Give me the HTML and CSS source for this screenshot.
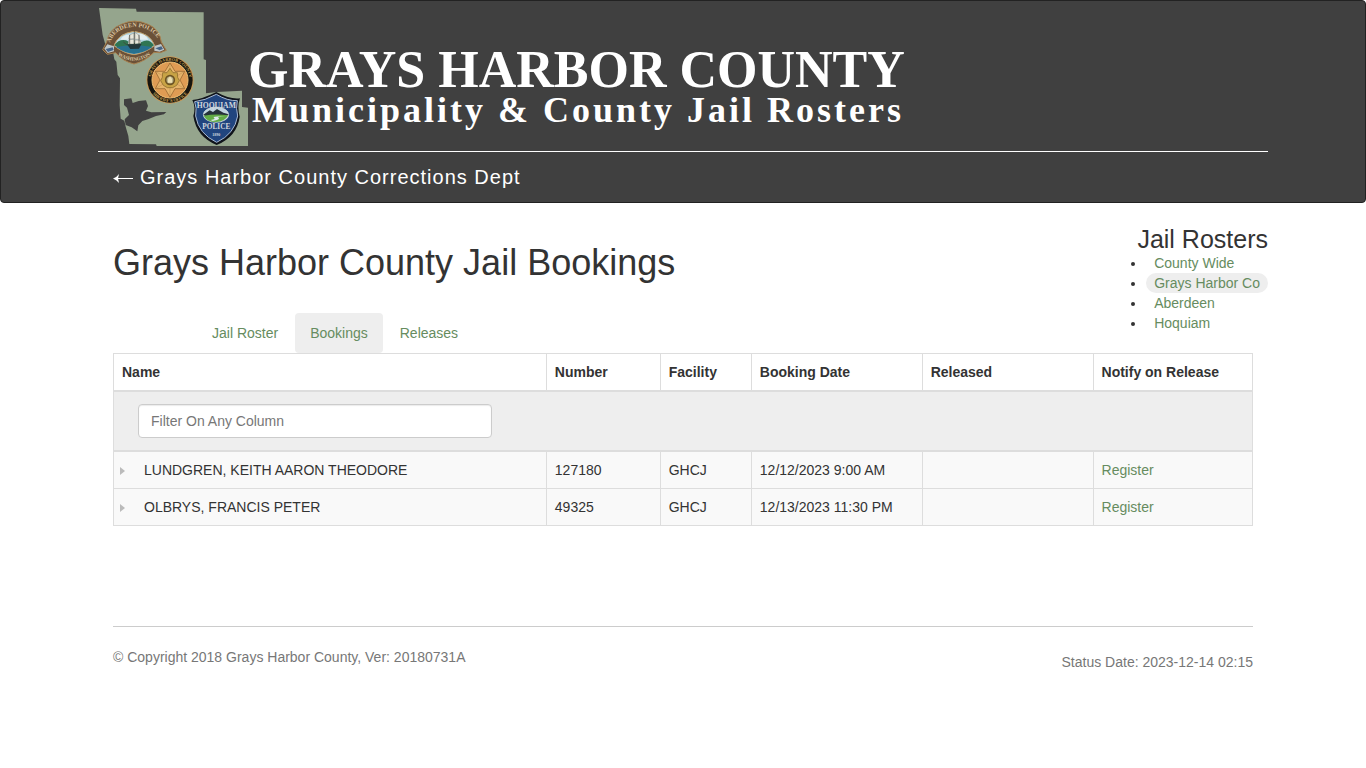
FILE: index.html
```html
<!DOCTYPE html>
<html lang="en">
<head>
  <meta charset="UTF-8" />
  <meta name="viewport" content="width=device-width, initial-scale=1" />
  <title>Grays Harbor County Jail Bookings</title>
  <link rel="stylesheet" href="styles.css">
</head>
<body>

  <header class="navbar">
    <div class="container">
      <div class="banner">
        <svg class="county-map" viewBox="24 24 450 417" aria-hidden="true">
          <defs>
            <path id="aberdeenTop" d="M58 136 Q70 84 133 80 Q194 83 211 132" />
            <path id="aberdeenBottom" d="M78 161 Q132 203 188 161" />
            <path id="sheriffTop" d="M182 240 A58 58 0 0 1 298 240" />
            <path id="sheriffBottom" d="M174 240 A66 66 0 0 0 306 240" />
          </defs>
          <!-- county outline with the harbor cut out -->
          <path fill="#95a58d" d="M27 24 L138 26 L140 35 L341 37 L341 178 L348 180 L348 280 L380 276 L456 272 L456 321 L474 323 L474 438 L200 438 L198 433 L118 432 L115 408 L107 380 L103 362 L92 356 L89 316 L90 235 L83 225 L79 185 L73 178 L68 150 L47 137 L38 105 Z" />
          <path fill="#404040" d="M102 298 L124 295 L128 309 L146 303 L168 301 L174 318 L168 332 L184 337 L229 336 L222 343 L198 348 L176 357 L157 363 L145 376 L142 394 L125 382 L107 375 L104 358 L117 345 L111 323 L102 315 Z" />

          <!-- Aberdeen -->
          <path fill="#6b5138" stroke="#a8814f" stroke-width="3" d="M38 149 L50 126 Q57 87 94 73 Q134 54 174 73 Q209 87 214 126 L229 151 L211 158 L192 157 Q166 184 132 192 Q98 184 77 158 L52 163 Z" />
          <path fill="#bfc7c9" d="M43 146 L52 133 L72 139 L72 154 L53 159 Z M193 138 L213 132 L223 149 L209 155 L193 152 Z" />
          <path fill="#456487" d="M47 147 L68 142 L71 150 L54 156 Z M196 145 L214 139 L219 147 L209 151 Z" />
          <path fill="#b4d6e3" stroke="#c49c62" stroke-width="3" d="M72 137 Q84 101 132 94 Q182 101 194 137 Q163 160 132 164 Q101 160 72 137 Z" />
          <path fill="#e5eef0" d="M91 119 Q101 102 121 105 L139 101 Q165 98 175 119 Z" />
          <path fill="#2f7552" d="M73 136 Q87 116 108 121 L124 130 L153 127 Q177 112 192 136 L180 144 H86 Z" />
          <path fill="#28718f" d="M78 141 Q132 130 187 141 Q163 158 132 162 Q101 158 78 141 Z" />
          <path fill="#24373a" d="M111 133 L155 131 L147 146 L121 147 Z" />
          <path fill="#e9e7dc" stroke="#59625f" stroke-width="1" d="M119 105 L132 99 L132 116 L116 117 Z M135 97 L147 106 L149 118 L135 118 Z M117 119 L132 118 L132 132 L114 132 Z M135 120 L151 121 L153 130 L135 132 Z" />
          <path stroke="#423e33" stroke-width="2" d="M133 91 V135 M119 105 V134 M147 104 V133 M111 135 L100 126" />
          <text class="seal-text aberdeen-text"><textPath href="#aberdeenTop" startOffset="8">ABERDEEN POLICE</textPath></text>
          <text class="seal-text aberdeen-small"><textPath href="#aberdeenBottom" startOffset="7">WASHINGTON</textPath></text>

          <!-- Sheriff -->
          <circle cx="240" cy="240" r="71" fill="#c99a58" />
          <circle cx="240" cy="240" r="68" fill="#17150f" />
          <circle cx="240" cy="240" r="54" fill="#df9c54" stroke="#efc176" stroke-width="3" />
          <path fill="#e6b46a" stroke="#8b5c28" stroke-width="2" d="M240 189 L255 214 L284 214 L270 240 L284 266 L255 266 L240 292 L225 266 L196 266 L210 240 L196 214 L225 214 Z" />
          <path stroke="#a6733d" stroke-width="1" d="M240 189 V292 M196 214 L284 266 M284 214 L196 266" />
          <path fill="#c8a345" stroke="#806025" stroke-width="2" d="M240 205 L249 218 L262 218 L263 232 L268 242 L260 256 L248 263 H232 L220 256 L212 242 L217 232 L218 218 L231 218 Z" />
          <circle cx="240" cy="240" r="13" fill="#b9b28a" stroke="#6d5322" stroke-width="5" />
          <path fill="#eee0b0" d="M234 237 L240 229 L246 237 V248 H234 Z" />
          <text class="seal-text sheriff-text"><textPath href="#sheriffTop" startOffset="10">GRAYS HARBOR COUNTY</textPath></text>
          <text class="seal-text sheriff-text"><textPath href="#sheriffBottom" startOffset="44">SHERIFF'S OFFICE</textPath></text>

          <!-- Hoquiam -->
          <path fill="#10141b" d="M307 300 Q335 298 379 276 Q420 299 450 295 Q441 320 449 350 Q441 410 380 435 Q319 410 310 348 Q318 322 307 300 Z" />
          <path fill="#21457f" stroke="#a8b8d2" stroke-width="3" d="M314 305 Q344 302 379 283 Q412 303 442 302 Q437 325 443 348 Q434 402 380 427 Q326 402 317 348 Q321 323 314 305 Z" />
          <ellipse cx="378" cy="344" rx="38" ry="23" fill="#bfd3e0" stroke="#e0e5df" stroke-width="2" />
          <path fill="#26323a" d="M340 344 L359 331 L369 336 L381 327 L400 338 L416 343 L407 349 H347 Z" />
          <path fill="#62ab46" d="M341 347 Q378 340 415 346 Q403 366 378 366 Q351 366 341 347 Z" />
          <path fill="#dde9eb" d="M405 349 Q379 350 386 354 Q392 358 368 363 L362 360 Q380 357 371 353 Q370 347 405 349 Z" />
          <text class="seal-text hoquiam-name" x="379" y="325">HOQUIAM</text>
          <text class="seal-text hoquiam-police" x="379" y="387">POLICE</text>
          <text class="seal-text hoquiam-year" x="379" y="408">1890</text>
        </svg>
        <div class="banner-text">
          <div class="banner-title">GRAYS HARBOR COUNTY</div>
          <div class="banner-subtitle">Municipality &amp; County Jail Rosters</div>
        </div>
      </div>
      <div class="department">
        <a href="#">
          <svg class="back-arrow" viewBox="0 0 20 12" aria-hidden="true">
            <path d="M20 5.5 H2" stroke="#fff" />
            <path d="M0 5.5 Q4 4 6 1 L5 5.5 L6 10 Q4 7 0 5.5 Z" fill="#fff" />
          </svg>
          Grays Harbor County Corrections Dept
        </a>
      </div>
    </div>
  </header>

  <main class="container content">
    <div class="page-top">
      <div>
        <h1>Grays Harbor County Jail Bookings</h1>
        <nav class="tabs">
          <a href="#">Jail Roster</a>
          <a href="#" class="active">Bookings</a>
          <a href="#">Releases</a>
        </nav>
      </div>
      <aside class="rosters">
        <h3>Jail Rosters</h3>
        <ul>
          <li><a href="#">County Wide</a></li>
          <li><a href="#" class="active">Grays Harbor Co</a></li>
          <li><a href="#">Aberdeen</a></li>
          <li><a href="#">Hoquiam</a></li>
        </ul>
      </aside>
    </div>

    <table>
      <colgroup>
        <col class="col-name"><col class="col-number"><col class="col-facility">
        <col class="col-date"><col class="col-date"><col class="col-notify">
      </colgroup>
      <thead>
        <tr>
          <th>Name</th><th>Number</th><th>Facility</th><th>Booking Date</th><th>Released</th><th>Notify on Release</th>
        </tr>
        <tr class="filter-row">
          <td colspan="6"><input type="text" id="filter" aria-label="Filter On Any Column" placeholder="Filter On Any Column" /></td>
        </tr>
      </thead>
      <tbody id="bookings">
        <tr>
          <td><button type="button" class="expand" aria-label="Show details"></button>LUNDGREN, KEITH AARON THEODORE</td>
          <td>127180</td>
          <td>GHCJ</td>
          <td>12/12/2023 9:00 AM</td>
          <td></td>
          <td><a href="#">Register</a></td>
        </tr>
        <tr>
          <td><button type="button" class="expand" aria-label="Show details"></button>OLBRYS, FRANCIS PETER</td>
          <td>49325</td>
          <td>GHCJ</td>
          <td>12/13/2023 11:30 PM</td>
          <td></td>
          <td><a href="#">Register</a></td>
        </tr>
      </tbody>
    </table>

    <footer>
      <p>© Copyright 2018 Grays Harbor County, Ver: 20180731A</p>
      <p class="status">Status Date: 2023-12-14 02:15</p>
    </footer>
  </main>

  <script>
    const filter = document.getElementById('filter');

    // Hide the bookings that do not contain the filter text
    filter.addEventListener('input', () => {
      const text = filter.value.trim().toLowerCase();
      document.querySelectorAll('#bookings tr').forEach(row => {
        row.hidden = !row.textContent.toLowerCase().includes(text);
      });
    });
  </script>

</body>
</html>
```
FILE: styles.css
```css
* {
  box-sizing: border-box;
}
body {
  margin: 0;
  font-family: "Liberation Sans", Arial, sans-serif;
  font-size: 14px;
  line-height: 20px;
  color: #333;
  background: #fff;
}
a {
  color: #668c60;
  text-decoration: none;
}
.container {
  max-width: 1170px;
  margin: 0 auto;
}

/* Header */
.navbar {
  background: #404040;
  border: 1px solid #222;
  border-radius: 4px;
}
.banner {
  display: flex;
  padding: 7px 0 4px;
  border-bottom: 1px solid #fff;
}
.county-map {
  width: 150px;
  height: 139px;
  flex: none;
}
.banner-text {
  padding-top: 36px;
  color: #fff;
  font-family: "Liberation Serif", "Times New Roman", serif;
  font-weight: bold;
  white-space: nowrap;
}
.banner-title {
  font-size: 52px;
  line-height: 52px;
}
.banner-subtitle {
  padding-left: 4px;
  font-size: 36px;
  line-height: 28px;
  letter-spacing: 3px;
}
.seal-text {
  font-family: "Liberation Serif", serif;
  font-weight: bold;
  fill: #dcc8a4;
}
.aberdeen-text {
  font-size: 18px;
}
.aberdeen-small {
  font-size: 15px;
}
.sheriff-text {
  font-size: 13px;
  fill: #c7a153;
}
.hoquiam-name,
.hoquiam-police,
.hoquiam-year {
  fill: #d2d7dc;
  text-anchor: middle;
}
.hoquiam-name {
  font-size: 23px;
}
.hoquiam-police {
  font-size: 22px;
}
.hoquiam-year {
  font-size: 12px;
}
.department {
  padding: 10px 15px;
  font-size: 20px;
  line-height: 30px;
  letter-spacing: 1px;
}
.department a {
  display: flex;
  align-items: center;
  gap: 7px;
  color: #fff;
}
.back-arrow {
  width: 20px;
  height: 12px;
  margin-top: 3px;
}

/* Title, tabs and roster list */
.content {
  padding: 0 15px;
}
.page-top {
  display: flex;
  justify-content: space-between;
  height: 150px;
}
h1 {
  margin: 40px 0 30px;
  font-size: 36px;
  line-height: 40px;
  font-weight: normal;
}
.tabs {
  display: flex;
  gap: 2px;
  margin-left: 84px;
}
.tabs a {
  padding: 10px 15px;
  border-radius: 4px;
}
.tabs a.active {
  background: #eee;
}
.rosters {
  margin-right: -15px;
  padding-top: 22px;
}
.rosters h3 {
  margin: 0;
  font-size: 25px;
  line-height: 28px;
  font-weight: normal;
  text-align: right;
}
.rosters ul {
  margin: 0;
  padding-left: 9px;
}
.rosters li a {
  display: block;
  padding: 0 8px;
}
.rosters li a.active {
  background: #eee;
  border-radius: 10px;
}

/* Bookings table */
table {
  width: 100%;
  table-layout: fixed;
  border-collapse: collapse;
}
.col-name {
  width: 38%;
}
.col-number {
  width: 10%;
}
.col-facility {
  width: 8%;
}
.col-date {
  width: 15%;
}
.col-notify {
  width: 14%;
}
th, td {
  padding: 8px;
  border: 1px solid #ddd;
  text-align: left;
}
th {
  border-bottom-width: 2px;
}
tbody tr {
  background: #f9f9f9;
}
.filter-row td {
  padding: 12px 24px;
  background: #eee;
  border-bottom-width: 2px;
}
.filter-row input {
  display: block;
  width: 354px;
  max-width: 100%;
  height: 34px;
  padding: 6px 12px;
  font: inherit;
  color: #555;
  background: #fff;
  border: 1px solid #ccc;
  border-radius: 4px;
  box-shadow: inset 0 1px 1px rgba(0, 0, 0, .08);
}
.filter-row input::placeholder {
  color: #777;
}
.expand {
  width: 5px;
  height: 8px;
  margin: 0 19px 0 -2px;
  padding: 0;
  background: #bbb;
  border: none;
  clip-path: polygon(0 0, 100% 50%, 0 100%);
  cursor: pointer;
}

footer {
  display: flex;
  justify-content: space-between;
  margin-top: 100px;
  padding-top: 20px;
  border-top: 1px solid #ccc;
  color: #777;
}
footer p {
  margin: 0;
}
footer .status {
  padding-top: 5px;
}
```
